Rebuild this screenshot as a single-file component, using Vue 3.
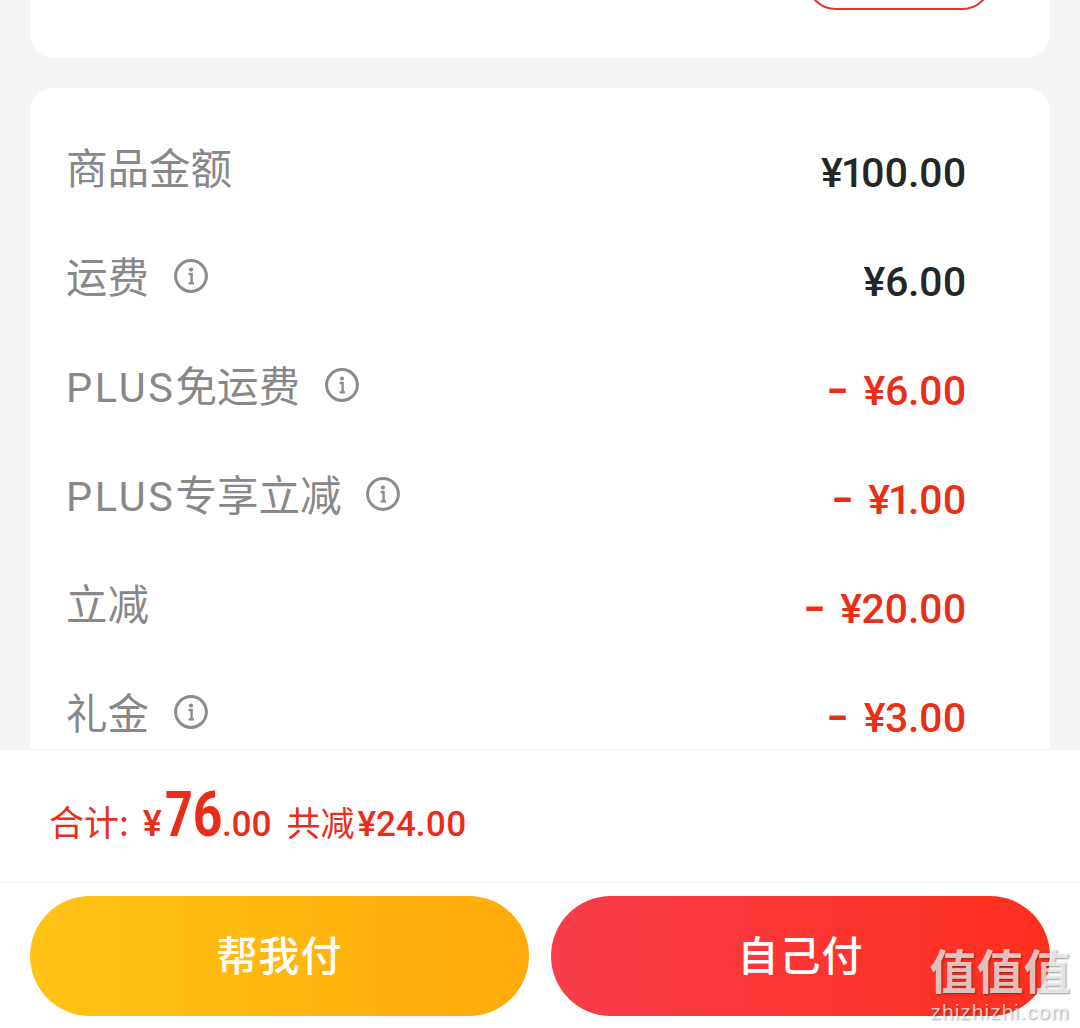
<script setup>
const rows = [
  { label: '商品金额', value: '¥100.00' },
  { label: '运费', value: '¥6.00', info: true },
  { latin: 'PLUS', label: '免运费', value: '¥6.00', info: true, minus: true },
  { latin: 'PLUS', label: '专享立减', value: '¥1.00', info: true, minus: true },
  { label: '立减', value: '¥20.00', minus: true },
  { label: '礼金', value: '¥3.00', info: true, minus: true },
]
</script>

<template>
  <div class="page">
    <div class="content">
      <section class="card card-top">
        <div class="outline-btn"></div>
      </section>
      <section class="card card-list">
        <div v-for="row in rows" :key="row.label" class="row">
          <div class="label">
            <span><span v-if="row.latin" class="latin">{{ row.latin }}</span>{{ row.label }}</span>
            <svg v-if="row.info" class="info" viewBox="0 0 34 34" width="34" height="34">
              <circle cx="17" cy="17" r="15.4" fill="none" stroke="#8c8c8c" stroke-width="3" />
              <circle cx="17" cy="10.6" r="2.1" fill="#8c8c8c" />
              <path d="M14.6 15h3v9.2M14.6 24.4h5.4" fill="none" stroke="#8c8c8c" stroke-width="2.4" />
            </svg>
          </div>
          <div class="value" :class="{ minus: row.minus }">
            <span v-if="row.minus" class="dash">-</span>{{ row.value }}
          </div>
        </div>
      </section>
    </div>

    <footer class="footer">
      <div class="total">
        <span class="total-label">合计:</span>
        <span class="yen">¥</span><span class="big">76</span><span class="cents">.00</span>
        <span class="saved">共减<b>¥24.00</b></span>
      </div>
      <div class="actions">
        <button class="pay pay-help">帮我付</button>
        <button class="pay pay-self">自己付</button>
      </div>
    </footer>

    <div class="watermark">
      <div class="wm-cn">值值值</div>
      <div class="wm-en">zhizhizhi.com</div>
    </div>
  </div>
</template>

<style>
body {
  margin: 0;
  background: #f5f5f5;
}
</style>

<style scoped>
.page {
  position: relative;
  width: 1080px;
  height: 1028px;
  overflow: hidden;
  display: flex;
  flex-direction: column;
  background: #f5f5f5;
  font-family: Roboto, "Noto Sans CJK SC", sans-serif;
  font-variant-numeric: proportional-nums;
}

.content {
  flex: 1;
  min-height: 0;
  overflow: hidden;
  padding: 0 30px;
}

.card {
  background: #fff;
  border-radius: 0 0 24px 24px;
}

.card-top {
  height: 58px;
  display: flex;
  justify-content: flex-end;
  align-items: flex-end;
  padding: 0 58px 48px 0;
  box-sizing: border-box;
}

.outline-btn {
  flex: none;
  width: 186px;
  height: 60px;
  box-sizing: border-box;
  border: 2px solid #e5361f;
  border-radius: 30px;
}

.card-list {
  margin-top: 30px;
  border-radius: 24px;
  padding: 27px 84px 40px 36px;
}

.row {
  height: 109px;
  display: flex;
  justify-content: space-between;
  align-items: center;
}

.label {
  display: flex;
  align-items: center;
  gap: 25px;
  margin-top: -7px;
  font-family: "Noto Sans CJK SC", sans-serif;
  font-size: 41.5px;
  color: #888;
}

.latin {
  font-family: Roboto, sans-serif;
  letter-spacing: 2.6px;
}

.info {
  flex: none;
  margin-top: 1px;
}

.value {
  margin-top: 7px;
  line-height: 48px;
  font-size: 41px;
  font-weight: 500;
  letter-spacing: -0.5px;
  color: #262626;
}

.value.minus {
  color: #ea2f18;
}

.dash {
  display: inline-block;
  margin: 0 15px 0 7px;
  font-weight: 700;
  transform: translateY(-2px) scaleX(1.45);
  transform-origin: right;
}

.footer {
  flex: none;
  height: 279px;
  box-sizing: border-box;
  background: #fff;
  border-top: 1px solid #f0f0f0;
}

.total {
  height: 133px;
  box-sizing: border-box;
  padding-left: 49px;
  display: flex;
  align-items: baseline;
  padding-top: 28px;
  border-bottom: 1px solid #f2f2f2;
  color: #ea2c1a;
  white-space: nowrap;
}

.total-label {
  font-family: "Noto Sans CJK SC", sans-serif;
  font-size: 35px;
  margin-right: 14px;
}

.yen {
  font-size: 36px;
  font-weight: 500;
  margin-right: 3px;
}

.big {
  display: inline-block;
  font-size: 63px;
  font-weight: 700;
  transform: scaleX(0.82);
  transform-origin: left;
  margin-right: -13px;
}

.cents {
  font-size: 35px;
  font-weight: 500;
  letter-spacing: -0.5px;
}

.saved {
  margin-left: 15px;
  font-family: "Noto Sans CJK SC", sans-serif;
  font-size: 34px;
}

.saved b {
  margin-left: 3px;
  font-family: Roboto, sans-serif;
  font-size: 35px;
  font-weight: 500;
  letter-spacing: 0;
}

.actions {
  display: flex;
  justify-content: space-between;
  padding: 13px 30px 0;
}

.pay {
  width: 499px;
  height: 120px;
  padding: 0 0 6px;
  border: 0;
  border-radius: 60px;
  font-family: "Noto Sans CJK SC", sans-serif;
  font-size: 41px;
  font-weight: 500;
  letter-spacing: 1px;
  color: #fff;
}

.pay-help {
  background: linear-gradient(90deg, #ffc316, #ffab0a);
}

.pay-self {
  background: linear-gradient(90deg, #f83d4b, #ff2f1c);
}

.watermark {
  position: absolute;
  right: 8px;
  bottom: 6px;
  width: 144px;
  text-align: center;
  color: rgba(255, 255, 255, 0.72);
  text-shadow: 1px 1px 2px rgba(0, 0, 0, 0.4);
}

.wm-cn {
  font-family: "Liberation Sans", "Noto Sans CJK SC", sans-serif;
  font-size: 47px;
  font-weight: 700;
  line-height: 46px;
  margin-bottom: 6px;
}

.wm-en {
  font-family: "Liberation Sans", sans-serif;
  font-size: 21px;
  line-height: 20px;
  letter-spacing: 1px;
}
</style>
